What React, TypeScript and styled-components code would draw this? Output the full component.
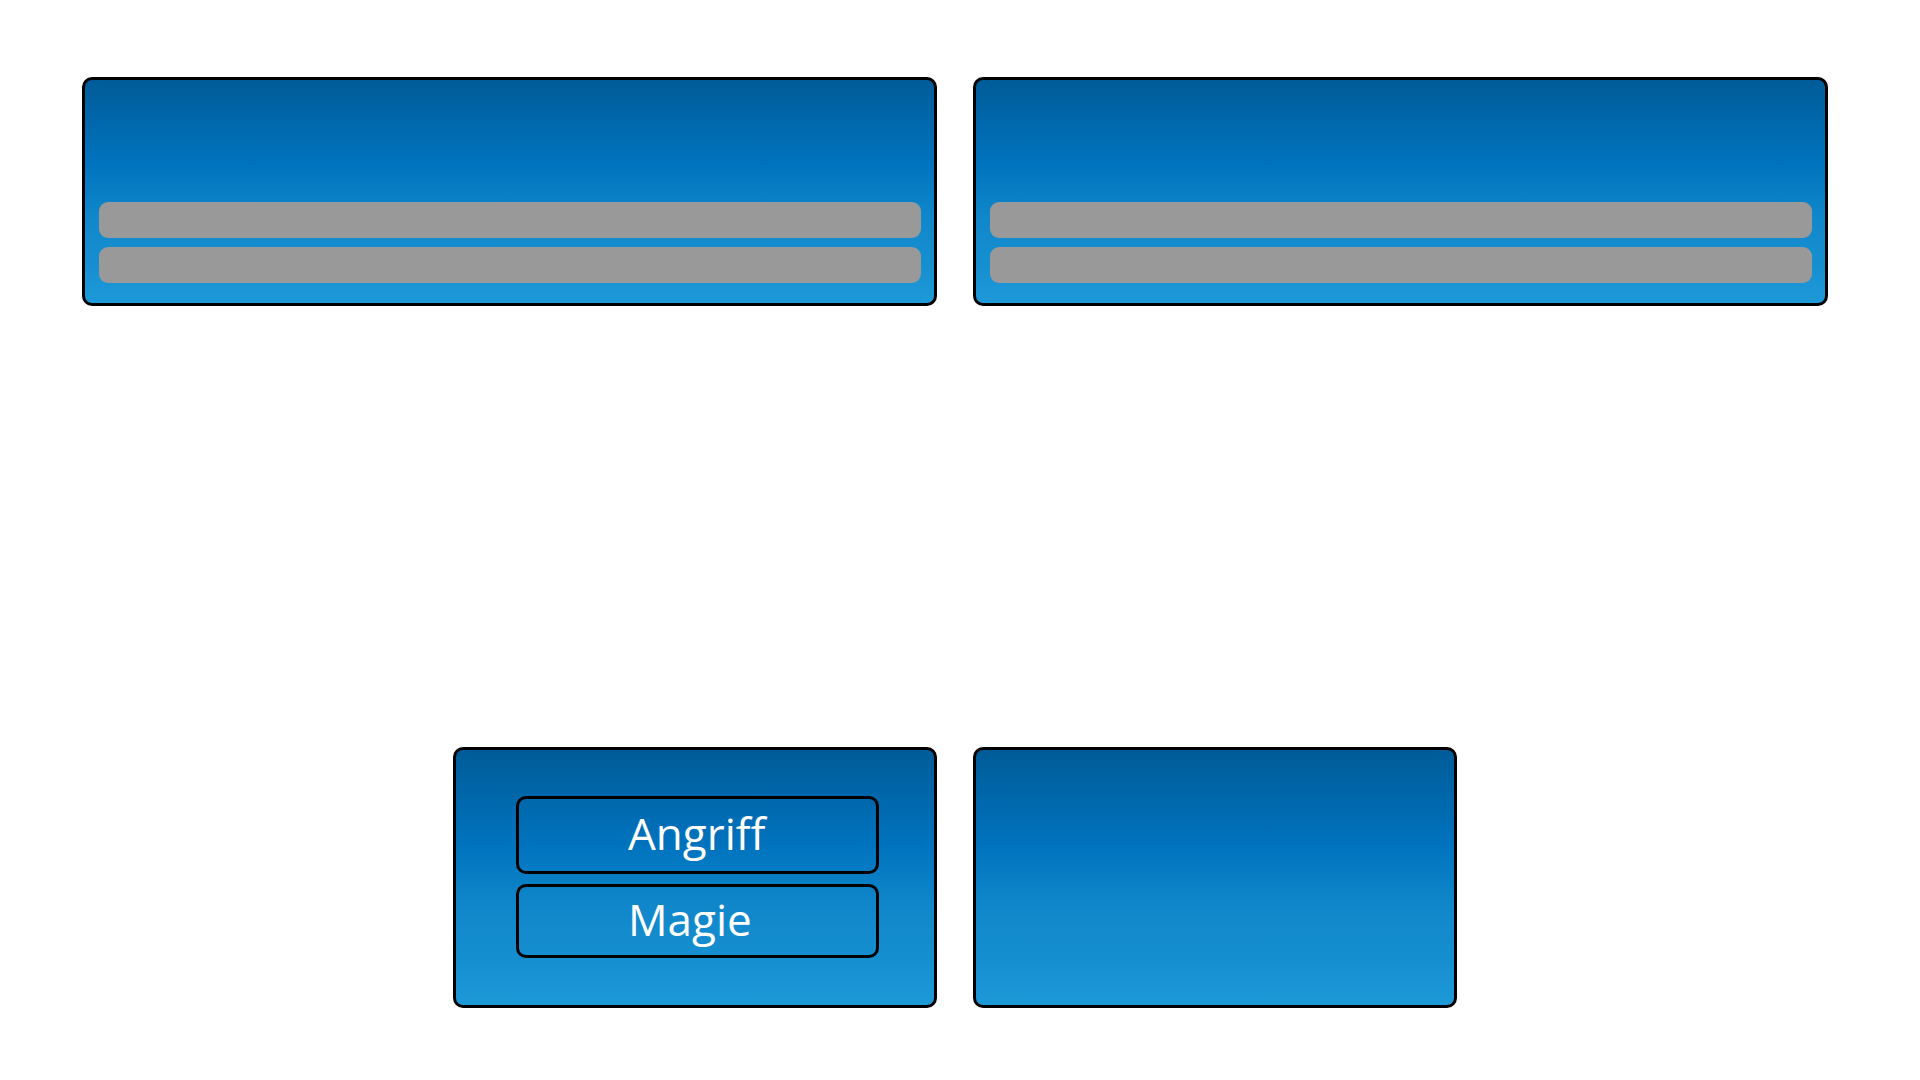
import React from "react";
import styled, { createGlobalStyle } from "styled-components";

const GlobalStyle = createGlobalStyle`
  *, *::before, *::after { box-sizing: border-box; }
  body { margin: 0; background: #fff; }
`;

const Screen = styled.main`
  min-height: 100vh;
  padding: 77px 92px 72px 82px;
  display: flex;
  flex-direction: column;
  justify-content: space-between;
  font-family: "Open Sans", "Noto Sans", sans-serif;
`;

const PanelRow = styled.section<{ $maxWidth?: string }>`
  display: grid;
  grid-template-columns: 1fr 1fr;
  gap: 36px;
  width: 100%;
  max-width: ${({ $maxWidth }) => $maxWidth ?? "none"};
  margin: 0 auto;
`;

const Panel = styled.div`
  display: flex;
  flex-direction: column;
  border: 3px solid #000;
  border-radius: 10px;
  background: linear-gradient(
    to bottom,
    #005b97 0%,
    #0073be 38%,
    #1087ca 61%,
    #168fd1 82%,
    #1e9ad8 100%
  );
  background-origin: border-box;
`;

const FighterPanel = styled(Panel)`
  gap: 9px;
  padding: 122px 13px 20px 14px;
`;

const StatBar = styled.div`
  height: 36px;
  border-radius: 9px;
  background: #999;
`;

const MenuPanel = styled(Panel)`
  gap: 10px;
  min-height: 261px;
  padding: 46px 55px 46px 60px;
`;

const ActionButton = styled.button<{ $height: number }>`
  height: ${({ $height }) => $height}px;
  padding: 0 0 4px 109px;
  border: 3px solid #000;
  border-radius: 10px;
  background: transparent;
  color: #fff;
  font-family: inherit;
  font-size: 44px;
  font-weight: 500;
  line-height: 60px;
  text-align: left;
  cursor: pointer;
`;

const fighters = ["left", "right"];

const actions = [
  { label: "Angriff", height: 78 },
  { label: "Magie", height: 74 },
];

export default function App() {
  return (
    <>
      <GlobalStyle />
      <Screen>
        <PanelRow>
          {fighters.map((side) => (
            <FighterPanel key={side}>
              <StatBar />
              <StatBar />
            </FighterPanel>
          ))}
        </PanelRow>
        <PanelRow $maxWidth="1004px">
          <MenuPanel>
            {actions.map(({ label, height }) => (
              <ActionButton key={label} type="button" $height={height}>
                {label}
              </ActionButton>
            ))}
          </MenuPanel>
          <MenuPanel />
        </PanelRow>
      </Screen>
    </>
  );
}
